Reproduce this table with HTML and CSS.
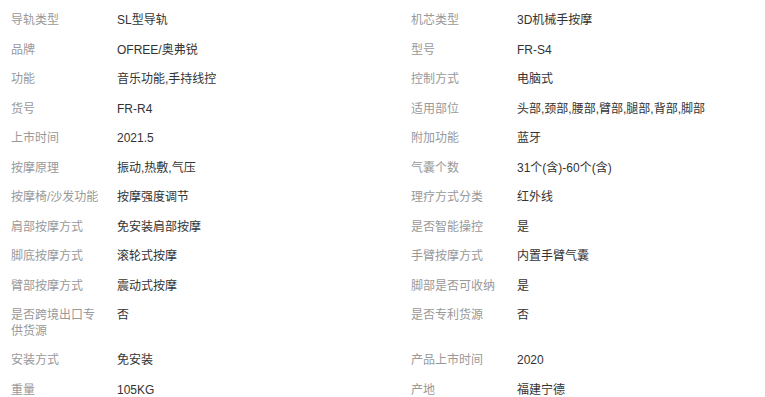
FILE: index.html
```html
<!DOCTYPE html>
<html lang="zh-CN">
<head>
<meta charset="utf-8">
<title>产品参数</title>
<link rel="stylesheet" href="styles.css">
</head>
<body>
<div class="specs">
  <div class="item"><div class="label">导轨类型</div><div class="value">SL型导轨</div></div>
  <div class="item"><div class="label">机芯类型</div><div class="value">3D机械手按摩</div></div>
  <div class="item"><div class="label">品牌</div><div class="value">OFREE/奥弗锐</div></div>
  <div class="item"><div class="label">型号</div><div class="value">FR-S4</div></div>
  <div class="item"><div class="label">功能</div><div class="value">音乐功能,手持线控</div></div>
  <div class="item"><div class="label">控制方式</div><div class="value">电脑式</div></div>
  <div class="item"><div class="label">货号</div><div class="value">FR-R4</div></div>
  <div class="item"><div class="label">适用部位</div><div class="value">头部,颈部,腰部,臂部,腿部,背部,脚部</div></div>
  <div class="item"><div class="label">上市时间</div><div class="value">2021.5</div></div>
  <div class="item"><div class="label">附加功能</div><div class="value">蓝牙</div></div>
  <div class="item"><div class="label">按摩原理</div><div class="value">振动,热敷,气压</div></div>
  <div class="item"><div class="label">气囊个数</div><div class="value">31个(含)-60个(含)</div></div>
  <div class="item"><div class="label">按摩椅/沙发功能</div><div class="value">按摩强度调节</div></div>
  <div class="item"><div class="label">理疗方式分类</div><div class="value">红外线</div></div>
  <div class="item"><div class="label">肩部按摩方式</div><div class="value">免安装肩部按摩</div></div>
  <div class="item"><div class="label">是否智能操控</div><div class="value">是</div></div>
  <div class="item"><div class="label">脚底按摩方式</div><div class="value">滚轮式按摩</div></div>
  <div class="item"><div class="label">手臂按摩方式</div><div class="value">内置手臂气囊</div></div>
  <div class="item"><div class="label">臂部按摩方式</div><div class="value">震动式按摩</div></div>
  <div class="item"><div class="label">脚部是否可收纳</div><div class="value">是</div></div>
  <div class="item"><div class="label">是否跨境出口专供货源</div><div class="value">否</div></div>
  <div class="item"><div class="label">是否专利货源</div><div class="value">否</div></div>
  <div class="item"><div class="label">安装方式</div><div class="value">免安装</div></div>
  <div class="item"><div class="label">产品上市时间</div><div class="value">2020</div></div>
  <div class="item"><div class="label">重量</div><div class="value">105KG</div></div>
  <div class="item"><div class="label">产地</div><div class="value">福建宁德</div></div>
</div>
</body>
</html>
```
FILE: styles.css
```css
html, body {
  margin: 0;
  padding: 0;
  background: #fff;
}
body {
  font-family: "Liberation Sans", "Noto Sans CJK SC", sans-serif;
  font-size: 12px;
  line-height: 15.5px;
}
.specs {
  display: grid;
  grid-template-columns: 400px 365px;
  padding: 6px 0 0 11px;
}
.item {
  display: flex;
  padding: 7px 0;
}
.label {
  width: 94px;
  padding-right: 12px;
  flex: none;
  color: #999;
}
.value {
  color: #333;
}
```
